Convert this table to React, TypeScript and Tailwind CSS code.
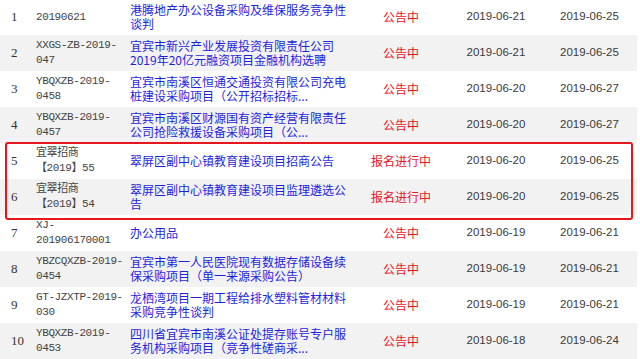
import React from 'react';

type Row = {
  no: number;
  code: string[];
  title: string[];
  status: string;
  start: string;
  end: string;
};

const ROWS: Row[] = [
  { no: 1, code: ['20190621'], title: ['港腾地产办公设备采购及维保服务竞争性', '谈判'], status: '公告中', start: '2019-06-21', end: '2019-06-25' },
  { no: 2, code: ['XXGS-ZB-2019-', '047'], title: ['宜宾市新兴产业发展投资有限责任公司', '2019年20亿元融资项目金融机构选聘'], status: '公告中', start: '2019-06-21', end: '2019-06-25' },
  { no: 3, code: ['YBQXZB-2019-', '0458'], title: ['宜宾市南溪区恒通交通投资有限公司充电', '桩建设采购项目（公开招标招标...'], status: '公告中', start: '2019-06-20', end: '2019-06-27' },
  { no: 4, code: ['YBQXZB-2019-', '0457'], title: ['宜宾市南溪区财源国有资产经营有限责任', '公司抢险救援设备采购项目（公...'], status: '公告中', start: '2019-06-20', end: '2019-06-27' },
  { no: 5, code: ['宜翠招商', '【2019】55'], title: ['翠屏区副中心镇教育建设项目招商公告'], status: '报名进行中', start: '2019-06-20', end: '2019-06-25' },
  { no: 6, code: ['宜翠招商', '【2019】54'], title: ['翠屏区副中心镇教育建设项目监理遴选公', '告'], status: '报名进行中', start: '2019-06-20', end: '2019-06-25' },
  { no: 7, code: ['XJ-', '201906170001'], title: ['办公用品'], status: '公告中', start: '2019-06-19', end: '2019-06-21' },
  { no: 8, code: ['YBZCQXZB-2019-', '0454'], title: ['宜宾市第一人民医院现有数据存储设备续', '保采购项目（单一来源采购公告）'], status: '公告中', start: '2019-06-19', end: '2019-06-21' },
  { no: 9, code: ['GT-JZXTP-2019-', '030'], title: ['龙栖湾项目一期工程给排水塑料管材材料', '采购竞争性谈判'], status: '公告中', start: '2019-06-19', end: '2019-06-21' },
  { no: 10, code: ['YBQXZB-2019-', '0453'], title: ['四川省宜宾市南溪公证处提存账号专户服', '务机构采购项目（竞争性磋商采...'], status: '公告中', start: '2019-06-18', end: '2019-06-24' },
];

function TableRow({ row }: { row: Row }) {
  return (
    <div
      className={`grid h-[36px] grid-cols-[36px_94px_222px_98px_92px_95px] items-center ${
        row.no % 2 === 0 ? 'bg-[#f2f2f2]' : 'bg-white'
      }`}
    >
      <div className="pl-[11px] font-['Liberation_Serif',serif] text-[13px] text-[#333]">{row.no}</div>
      <div className="font-['Liberation_Mono','Noto_Sans_CJK_SC',monospace] text-[11px] leading-[15px] tracking-[-0.4px] text-[#444]">
        {row.code.map((line, i) => (
          <div key={i} className="whitespace-nowrap">{line}</div>
        ))}
      </div>
      <div className="font-['Noto_Sans_CJK_SC',sans-serif] text-[12px] leading-[14px] text-[#1f1fe0]">
        {row.title.map((line, i) => (
          <div key={i} className="whitespace-nowrap">{line}</div>
        ))}
      </div>
      <div className="text-center font-['Noto_Sans_CJK_SC',sans-serif] text-[12px] leading-[14px] text-[#e8161e]">{row.status}</div>
      <div className="text-center font-['Liberation_Sans',sans-serif] text-[11.5px] text-[#3a3a3a]">{row.start}</div>
      <div className="text-center font-['Liberation_Sans',sans-serif] text-[11.5px] text-[#3a3a3a]">{row.end}</div>
    </div>
  );
}

export default function App() {
  const before = ROWS.slice(0, 4);
  const marked = ROWS.slice(4, 6);
  const after = ROWS.slice(6);

  return (
    <div className="h-[359px] w-[640px] overflow-hidden bg-white">
      <div className="mt-[-1px] w-[637px]">
        {before.map(r => (
          <TableRow key={r.no} row={r} />
        ))}

        {/* highlighted rows */}
        <div className="relative">
          {marked.map(r => (
            <TableRow key={r.no} row={r} />
          ))}
          <div className="pointer-events-none absolute -top-[1px] -bottom-[5px] left-[5px] right-[4px] rounded-[3px] border-2 border-[#e5161d]" />
        </div>

        {after.map(r => (
          <TableRow key={r.no} row={r} />
        ))}
      </div>
    </div>
  );
}
